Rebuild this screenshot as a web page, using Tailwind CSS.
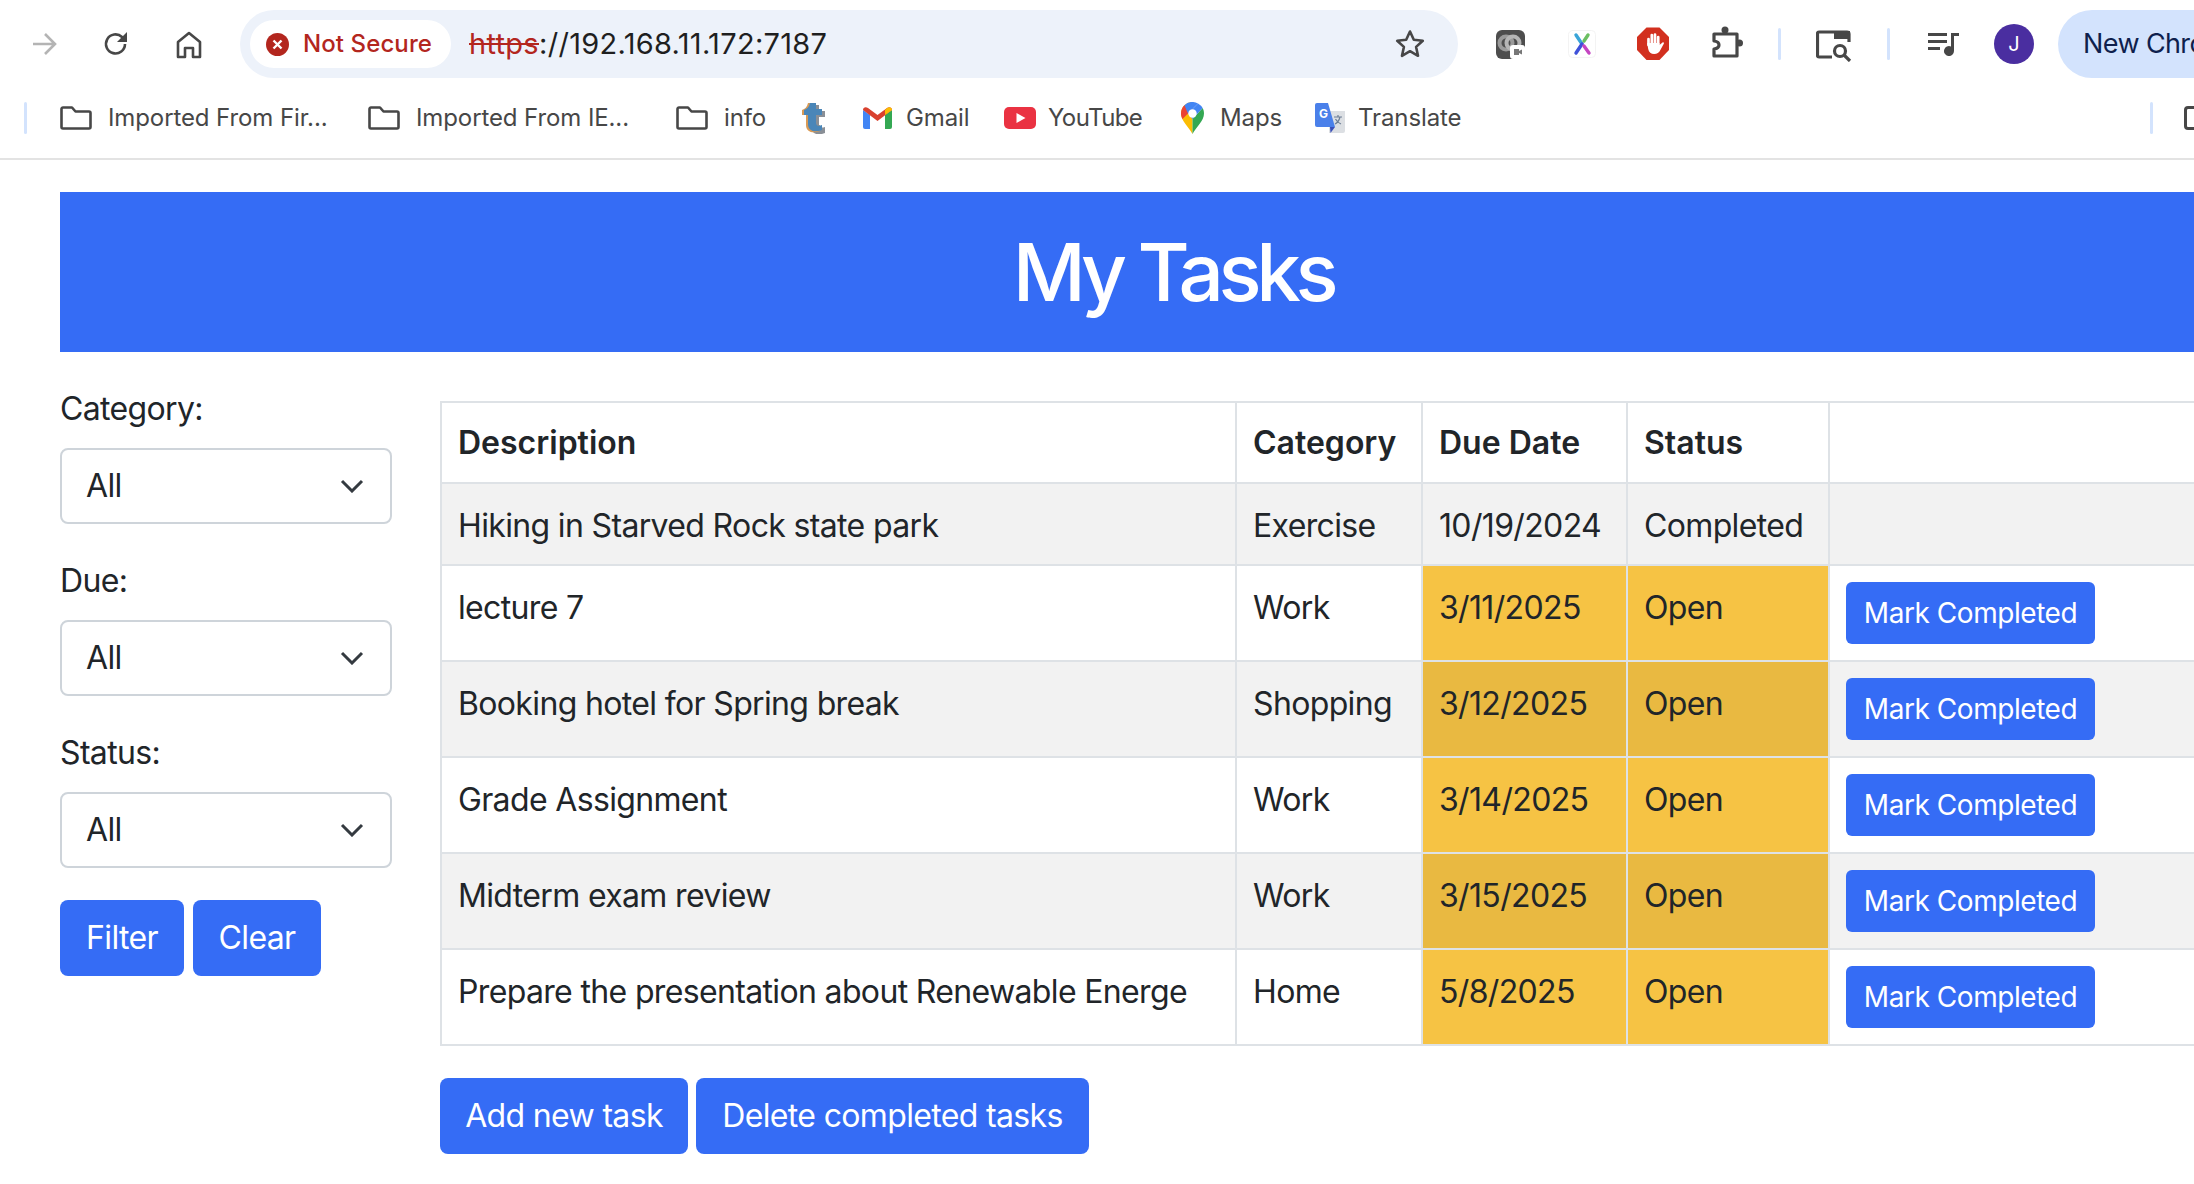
<!DOCTYPE html>
<html lang="en">
<head>
  <meta charset="UTF-8">
  <meta name="viewport" content="width=device-width, initial-scale=1.0">
  <title>My Tasks</title>
  <script src="https://cdn.jsdelivr.net/npm/@tailwindcss/browser@4"></script>
</head>
<body class="h-[1184px] w-[2194px] overflow-hidden bg-white font-['Inter',sans-serif] text-[#212529]">
  <!-- browser toolbar -->
  <div class="flex h-[88px] w-[2194px] items-start overflow-hidden pt-[10px]">
    <svg class="ml-[32px] mt-[22px] h-[24px] w-[26px] shrink-0" viewBox="0 0 26 24" fill="none" stroke="#b4b4b4" stroke-width="2.6"><path d="M1 12h22M13 2l10 10-10 10"/></svg>
    <svg class="ml-[45px] mt-[21px] h-[26px] w-[26px] shrink-0" viewBox="0 0 26 26" fill="none" stroke="#474747" stroke-width="2.6"><path d="M22 13a9.500 9.500 0 1 1-3-7l3 3"/><path d="M24 1v10H14z" fill="#474747" stroke="none"/></svg>
    <svg class="ml-[47px] mt-[21px] h-[28px] w-[26px] shrink-0" viewBox="0 0 26 28" fill="none" stroke="#474747" stroke-width="2.6" stroke-linejoin="round"><path d="M2 26V11L13 2l11 9v15h-7v-9H9v9z"/></svg>
    <div class="ml-[38px] flex h-[68px] w-[1218px] shrink-0 items-center rounded-full bg-[#edf2fa] pl-[10px] pr-[33px]">
      <div class="flex h-[48px] w-[201px] shrink-0 items-center rounded-full bg-white pl-[16px]">
        <svg class="h-[23px] w-[23px] shrink-0" viewBox="0 0 23 23"><circle cx="11.500" cy="11.500" r="11.500" fill="#b3261e"/><path d="M7.500 7.500l8 8M15.500 7.500l-8 8" stroke="#fff" stroke-width="2.4"/></svg>
        <span class="ml-[14px] text-[24px] font-medium tracking-[0.1px] whitespace-nowrap text-[#b3261e]">Not Secure</span>
      </div>
      <div class="ml-[18px] text-[29px] tracking-[0.3px] whitespace-nowrap text-[#1f1f1f]"><span class="text-[#b3261e] line-through">https</span>://192.168.11.172:7187</div>
      <svg class="ml-auto h-[30px] w-[30px] shrink-0" viewBox="0 0 30 30" fill="none" stroke="#474747" stroke-width="2.6" stroke-linejoin="round"><path d="M15 2.500l3.800 8.300 9 1-6.700 6.100 1.900 8.900L15 22.200l-8 4.600 1.900-8.900-6.700-6.100 9-1z"/></svg>
    </div>
    <svg class="ml-[38px] mt-[20px] h-[29px] w-[29px] shrink-0" viewBox="0 0 29 29"><rect width="29" height="29" rx="6" fill="#4d4d4d"/><circle cx="10" cy="13" r="6.500" fill="none" stroke="#9a9a9a" stroke-width="4"/><circle cx="17" cy="13" r="6.500" fill="none" stroke="#b5b5b5" stroke-width="4"/><rect x="14" y="15" width="15" height="14" rx="3" fill="#fff"/><path d="M18 19h5v6h-5zM23 21l3-1.500v5l-3-1.500z" fill="#777"/></svg>
    <svg class="ml-[43px] mt-[20px] h-[28px] w-[28px] shrink-0" viewBox="0 0 28 28" fill="none" stroke-width="3.400" stroke-linecap="round"><rect x="0.500" y="0.500" width="27" height="27" rx="4" fill="#fff" stroke="#f3f3f3" stroke-width="1"/><path d="M8 5l6 9" stroke="#3aa5d8"/><path d="M14 14l-6 9" stroke="#3f51d9"/><path d="M20 5l-4 6" stroke="#6cbf62"/><path d="M16 16l5 7" stroke="#c545c2"/></svg>
    <svg class="ml-[41px] mt-[17px] h-[33px] w-[32px] shrink-0" viewBox="0 0 32 33"><path d="M9.500 0.500h13L32 10v13l-9.500 10h-13L0 23V10z" fill="#d2301f"/><path d="M11.500 18V12M14.800 17V8M18 17V7.500M21.200 18V10" stroke="#fff" stroke-width="2.700" stroke-linecap="round" fill="none"/><path d="M10.200 16h12.300v2l3-2.500c.8-.6 1.800.3 1.300 1.200l-3.300 6c-1.400 3-3.500 4.300-6.300 4.300-3.200 0-5.300-1.800-6-5z" fill="#fff"/></svg>
    <svg class="ml-[42px] mt-[16px] h-[32px] w-[32px] shrink-0" viewBox="0 0 32 32" fill="none" stroke="#474747" stroke-width="3.200" stroke-linejoin="round"><path d="M3 8h23v22H3v-7c3.500-.5 5-2 5-4s-1.500-3.500-5-4z"/><circle cx="14" cy="4" r="3.500" fill="#474747" stroke="none"/><circle cx="28.500" cy="17" r="3.500" fill="#474747" stroke="none"/></svg>
    <div class="ml-[35px] mt-[18px] h-[32px] w-[3px] shrink-0 rounded-full bg-[#d3e3fd]"></div>
    <svg class="ml-[35px] mt-[20px] h-[32px] w-[36px] shrink-0" viewBox="0 0 36 32" fill="none" stroke="#474747" stroke-width="3.200"><path d="M16 27H3a1.500 1.500 0 0 1-1.500-1.500V3.500A1.500 1.500 0 0 1 3 2h28a2 2 0 0 1 2 2v8"/><path d="M18 1h16v8H18z" fill="#474747" stroke="none"/><circle cx="24" cy="21" r="5.500"/><path d="M28 25l6 6"/></svg>
    <div class="ml-[35px] mt-[18px] h-[32px] w-[3px] shrink-0 rounded-full bg-[#d3e3fd]"></div>
    <svg class="ml-[38px] mt-[22px] h-[24px] w-[31px] shrink-0" viewBox="0 0 31 24" fill="#474747"><path d="M0 1h19v3H0zM0 8h19v3H0zM0 15h12v3H0zM23 1h8v3h-5v15a5 5 0 1 1-3-4.500z"/></svg>
    <div class="ml-[35px] mt-[14px] flex h-[40px] w-[40px] shrink-0 items-center justify-center rounded-full bg-[#4a2ea0] text-[20px] text-white">J</div>
    <div class="ml-[24px] flex h-[68px] w-[200px] shrink-0 items-center rounded-l-full bg-[#d3e3fd] pl-[25px] text-[27px] tracking-[-0.6px] whitespace-nowrap text-[#0f1f4d]">New Chrome</div>
  </div>

  <!-- bookmarks bar -->
  <div class="flex h-[72px] w-[2194px] items-center overflow-hidden border-b-2 border-[#e3e3e3] pb-[10px] text-[24px] tracking-[-0.1px] whitespace-nowrap text-[#474747]">
    <div class="ml-[24px] h-[32px] w-[3px] shrink-0 rounded-full bg-[#d3e3fd]"></div>
    <svg class="ml-[33px] h-[24px] w-[32px] shrink-0" viewBox="0 0 32 24" fill="none" stroke="#474747" stroke-width="2.6" stroke-linejoin="round"><path d="M1.500 3a1.500 1.500 0 0 1 1.500-1.500h9l3.500 4H29a1.500 1.500 0 0 1 1.500 1.500v14a1.500 1.500 0 0 1-1.500 1.500H3A1.500 1.500 0 0 1 1.500 21z"/></svg>
    <span class="ml-[16px] w-[221px] shrink-0">Imported From Fir...</span>
    <svg class="ml-[39px] h-[24px] w-[32px] shrink-0" viewBox="0 0 32 24" fill="none" stroke="#474747" stroke-width="2.6" stroke-linejoin="round"><path d="M1.500 3a1.500 1.500 0 0 1 1.500-1.500h9l3.500 4H29a1.500 1.500 0 0 1 1.500 1.500v14a1.500 1.500 0 0 1-1.500 1.500H3A1.500 1.500 0 0 1 1.500 21z"/></svg>
    <span class="ml-[16px] w-[214px] shrink-0">Imported From IE...</span>
    <svg class="ml-[46px] h-[24px] w-[32px] shrink-0" viewBox="0 0 32 24" fill="none" stroke="#474747" stroke-width="2.6" stroke-linejoin="round"><path d="M1.500 3a1.500 1.500 0 0 1 1.500-1.500h9l3.500 4H29a1.500 1.500 0 0 1 1.500 1.500v14a1.500 1.500 0 0 1-1.500 1.500H3A1.500 1.500 0 0 1 1.500 21z"/></svg>
    <span class="ml-[16px] w-[42px] shrink-0">info</span>
    <svg class="ml-[34px] h-[32px] w-[25px] shrink-0" viewBox="0 0 25 32"><path d="M11 1h6v6h6v6h-6v8c0 3 3 3 6 2v6c-7 3-14 1-14-6V13H5V8c3-1 5-3 6-7z" fill="#8a8f96" transform="translate(2 2)"/><path d="M9 1h6v6h6v6h-6v8c0 3 3 3 6 2v6c-7 3-14 1-14-6V13H3V8c3-1 5-3 6-7z" fill="#d99a55" transform="translate(-1 0)"/><path d="M10 1h6v6h6v6h-6v8c0 3 3 3 6 2v5c-7 3-14 1-14-6V13H4V8c3-1 5-3 6-7z" fill="#4a86b8"/></svg>
    <svg class="ml-[38px] h-[22px] w-[29px] shrink-0" viewBox="0 0 29 22"><path d="M2 22a2 2 0 0 1-2-2V3l7 5v14z" fill="#4285f4"/><path d="M27 22a2 2 0 0 0 2-2V3l-7 5v14z" fill="#34a853"/><path d="M0 3c0-3 3-3.500 5-2l9.500 7 9.500-7c2-1.500 5-1 5 2l-14.500 11z" fill="#d9412f"/><path d="M24 1c2-1.500 5-1 5 2l-7 5V3z" fill="#fbbc04"/></svg>
    <span class="ml-[14px] w-[64px] shrink-0">Gmail</span>
    <svg class="ml-[34px] h-[22px] w-[32px] shrink-0" viewBox="0 0 32 22"><rect width="32" height="22" rx="5" fill="#ea3242"/><path d="M12.500 6l9 5-9 5z" fill="#fff"/></svg>
    <span class="ml-[12px] w-[94px] shrink-0 tracking-[-0.6px]">YouTube</span>
    <svg class="ml-[39px] h-[32px] w-[23px] shrink-0" viewBox="0 0 23 32"><path d="M11.500 32C8 25 0 19 0 11.500A11.500 11.500 0 0 1 11.500 0z" fill="#fbbc04"/><path d="M11.500 32c3.500-7 11.500-13 11.500-20.500 0-2-.5-3.800-1.400-5.400L11.500 17z" fill="#34a853"/><path d="M3.400 3.300A11.500 11.500 0 0 0 0 11.500c0 2 .6 3.800 1.500 5.500l10-10z" fill="#ea4335"/><path d="M3.400 3.300A11.500 11.500 0 0 1 17 1.400L7 11.500z" fill="#4285f4"/><path d="M17 1.400a11.500 11.500 0 0 1 4.600 4.700L11.500 17l-4.500-5.500z" fill="#4285f4"/><circle cx="11.500" cy="11.500" r="4.200" fill="#fff"/></svg>
    <span class="ml-[16px] w-[61px] shrink-0">Maps</span>
    <svg class="ml-[34px] h-[30px] w-[30px] shrink-0" viewBox="0 0 30 30"><path d="M14 8h16v20a2 2 0 0 1-2 2H14z" fill="#dcdfe3"/><path d="M0 2a2 2 0 0 1 2-2h11l7 24H2a2 2 0 0 1-2-2z" fill="#4a80ea"/><path d="M15 24h5l-4.500 6z" fill="#3a50b8"/><text x="4" y="15" font-size="12" font-weight="700" fill="#fff">G</text><path d="M19 14h8M23 12v2M25 14c-1 4-3 6-5 7M20.500 16c1 2 3 4 5.500 5" stroke="#6d7f96" stroke-width="1.200" fill="none"/></svg>
    <span class="ml-[13px] w-[102px] shrink-0">Translate</span>
    <div class="ml-[690px] h-[32px] w-[3px] shrink-0 rounded-full bg-[#d3e3fd]"></div>
    <div class="ml-[31px] h-[24px] w-[20px] shrink-0 rounded-l-[4px] border-y-[3px] border-l-[3px] border-[#474747]"></div>
  </div>

  <!-- page -->
  <div class="w-[2292px] pt-[32px] pl-[60px]">
    <header class="flex h-[160px] w-[2226px] items-center justify-center bg-[#356cf5] text-[80px] font-medium tracking-[-5.4px] text-white">My Tasks</header>

    <div class="mt-[33px] flex items-start text-[32px] tracking-[-0.65px]">
      <!-- filters -->
      <aside class="w-[380px] shrink-0">
        <div class="w-[332px]">
          <label class="block h-[48px] leading-[48px]">Category:</label>
          <div class="mt-[15px] flex h-[76px] items-center justify-between rounded-[8px] border-2 border-[#ced4da] pr-[26px] pl-[24px]">All
            <svg class="h-[14px] w-[24px]" viewBox="0 0 24 14" fill="none" stroke="#343a40" stroke-width="3"><path d="M2 2l10 10L22 2"/></svg>
          </div>
          <label class="mt-[33px] block h-[48px] leading-[48px]">Due:</label>
          <div class="mt-[15px] flex h-[76px] items-center justify-between rounded-[8px] border-2 border-[#ced4da] pr-[26px] pl-[24px]">All
            <svg class="h-[14px] w-[24px]" viewBox="0 0 24 14" fill="none" stroke="#343a40" stroke-width="3"><path d="M2 2l10 10L22 2"/></svg>
          </div>
          <label class="mt-[33px] block h-[48px] leading-[48px]">Status:</label>
          <div class="mt-[15px] flex h-[76px] items-center justify-between rounded-[8px] border-2 border-[#ced4da] pr-[26px] pl-[24px]">All
            <svg class="h-[14px] w-[24px]" viewBox="0 0 24 14" fill="none" stroke="#343a40" stroke-width="3"><path d="M2 2l10 10L22 2"/></svg>
          </div>
        </div>
        <div class="mt-[32px] flex gap-[9px]">
          <button class="h-[76px] w-[124px] rounded-[8px] bg-[#356cf5] text-white">Filter</button>
          <button class="h-[76px] w-[128px] rounded-[8px] bg-[#356cf5] text-white">Clear</button>
        </div>
      </aside>

      <!-- tasks -->
      <main class="w-[1852px] pt-[16px]">
        <table class="w-full table-fixed border-collapse leading-[48px]">
          <thead>
            <tr class="text-left">
              <th class="h-[81px] w-[795px] border-2 border-[#dee2e6] px-[16px] align-top pt-[16px] font-semibold tracking-normal">Description</th>
              <th class="w-[186px] border-2 border-[#dee2e6] px-[16px] align-top pt-[16px] font-semibold tracking-normal">Category</th>
              <th class="w-[205px] border-2 border-[#dee2e6] px-[16px] align-top pt-[16px] font-semibold tracking-normal">Due Date</th>
              <th class="w-[202px] border-2 border-[#dee2e6] px-[16px] align-top pt-[16px] font-semibold tracking-normal">Status</th>
              <th class="border-2 border-[#dee2e6] px-[16px]"></th>
            </tr>
          </thead>
          <tbody>
            <tr class="h-[82px] bg-[#f2f2f2]">
              <td class="border-2 border-[#dee2e6] px-[16px] align-top pt-[18px]">Hiking in Starved Rock state park</td>
              <td class="border-2 border-[#dee2e6] px-[16px] align-top pt-[18px]">Exercise</td>
              <td class="border-2 border-[#dee2e6] px-[16px] align-top pt-[18px]">10/19/2024</td>
              <td class="border-2 border-[#dee2e6] px-[16px] align-top pt-[18px]">Completed</td>
              <td class="border-2 border-[#dee2e6] px-[16px]"></td>
            </tr>
            <tr class="h-[96px]">
              <td class="border-2 border-[#dee2e6] px-[16px] align-top pt-[18px]">lecture 7</td>
              <td class="border-2 border-[#dee2e6] px-[16px] align-top pt-[18px]">Work</td>
              <td class="border-2 border-[#dee2e6] bg-[#f6c344] px-[16px] align-top pt-[18px]">3/11/2025</td>
              <td class="border-2 border-[#dee2e6] bg-[#f6c344] px-[16px] align-top pt-[18px]">Open</td>
              <td class="border-2 border-[#dee2e6] px-[16px] align-top pt-[16px]"><button class="block h-[62px] w-[249px] rounded-[6px] bg-[#356cf5] text-[28px] tracking-[-0.45px] text-white">Mark Completed</button></td>
            </tr>
            <tr class="h-[96px] bg-[#f2f2f2]">
              <td class="border-2 border-[#dee2e6] px-[16px] align-top pt-[18px]">Booking hotel for Spring break</td>
              <td class="border-2 border-[#dee2e6] px-[16px] align-top pt-[18px]">Shopping</td>
              <td class="border-2 border-[#dee2e6] bg-[#e9b941] px-[16px] align-top pt-[18px]">3/12/2025</td>
              <td class="border-2 border-[#dee2e6] bg-[#e9b941] px-[16px] align-top pt-[18px]">Open</td>
              <td class="border-2 border-[#dee2e6] px-[16px] align-top pt-[16px]"><button class="block h-[62px] w-[249px] rounded-[6px] bg-[#356cf5] text-[28px] tracking-[-0.45px] text-white">Mark Completed</button></td>
            </tr>
            <tr class="h-[96px]">
              <td class="border-2 border-[#dee2e6] px-[16px] align-top pt-[18px]">Grade Assignment</td>
              <td class="border-2 border-[#dee2e6] px-[16px] align-top pt-[18px]">Work</td>
              <td class="border-2 border-[#dee2e6] bg-[#f6c344] px-[16px] align-top pt-[18px]">3/14/2025</td>
              <td class="border-2 border-[#dee2e6] bg-[#f6c344] px-[16px] align-top pt-[18px]">Open</td>
              <td class="border-2 border-[#dee2e6] px-[16px] align-top pt-[16px]"><button class="block h-[62px] w-[249px] rounded-[6px] bg-[#356cf5] text-[28px] tracking-[-0.45px] text-white">Mark Completed</button></td>
            </tr>
            <tr class="h-[96px] bg-[#f2f2f2]">
              <td class="border-2 border-[#dee2e6] px-[16px] align-top pt-[18px]">Midterm exam review</td>
              <td class="border-2 border-[#dee2e6] px-[16px] align-top pt-[18px]">Work</td>
              <td class="border-2 border-[#dee2e6] bg-[#e9b941] px-[16px] align-top pt-[18px]">3/15/2025</td>
              <td class="border-2 border-[#dee2e6] bg-[#e9b941] px-[16px] align-top pt-[18px]">Open</td>
              <td class="border-2 border-[#dee2e6] px-[16px] align-top pt-[16px]"><button class="block h-[62px] w-[249px] rounded-[6px] bg-[#356cf5] text-[28px] tracking-[-0.45px] text-white">Mark Completed</button></td>
            </tr>
            <tr class="h-[96px]">
              <td class="border-2 border-[#dee2e6] px-[16px] align-top pt-[18px]">Prepare the presentation about Renewable Energe</td>
              <td class="border-2 border-[#dee2e6] px-[16px] align-top pt-[18px]">Home</td>
              <td class="border-2 border-[#dee2e6] bg-[#f6c344] px-[16px] align-top pt-[18px]">5/8/2025</td>
              <td class="border-2 border-[#dee2e6] bg-[#f6c344] px-[16px] align-top pt-[18px]">Open</td>
              <td class="border-2 border-[#dee2e6] px-[16px] align-top pt-[16px]"><button class="block h-[62px] w-[249px] rounded-[6px] bg-[#356cf5] text-[28px] tracking-[-0.45px] text-white">Mark Completed</button></td>
            </tr>
          </tbody>
        </table>
        <div class="mt-[32px] flex gap-[8px]">
          <button class="h-[76px] w-[248px] rounded-[8px] bg-[#356cf5] text-white">Add new task</button>
          <button class="h-[76px] w-[393px] rounded-[8px] bg-[#356cf5] text-white">Delete completed tasks</button>
        </div>
      </main>
    </div>
  </div>
</body>
</html>
